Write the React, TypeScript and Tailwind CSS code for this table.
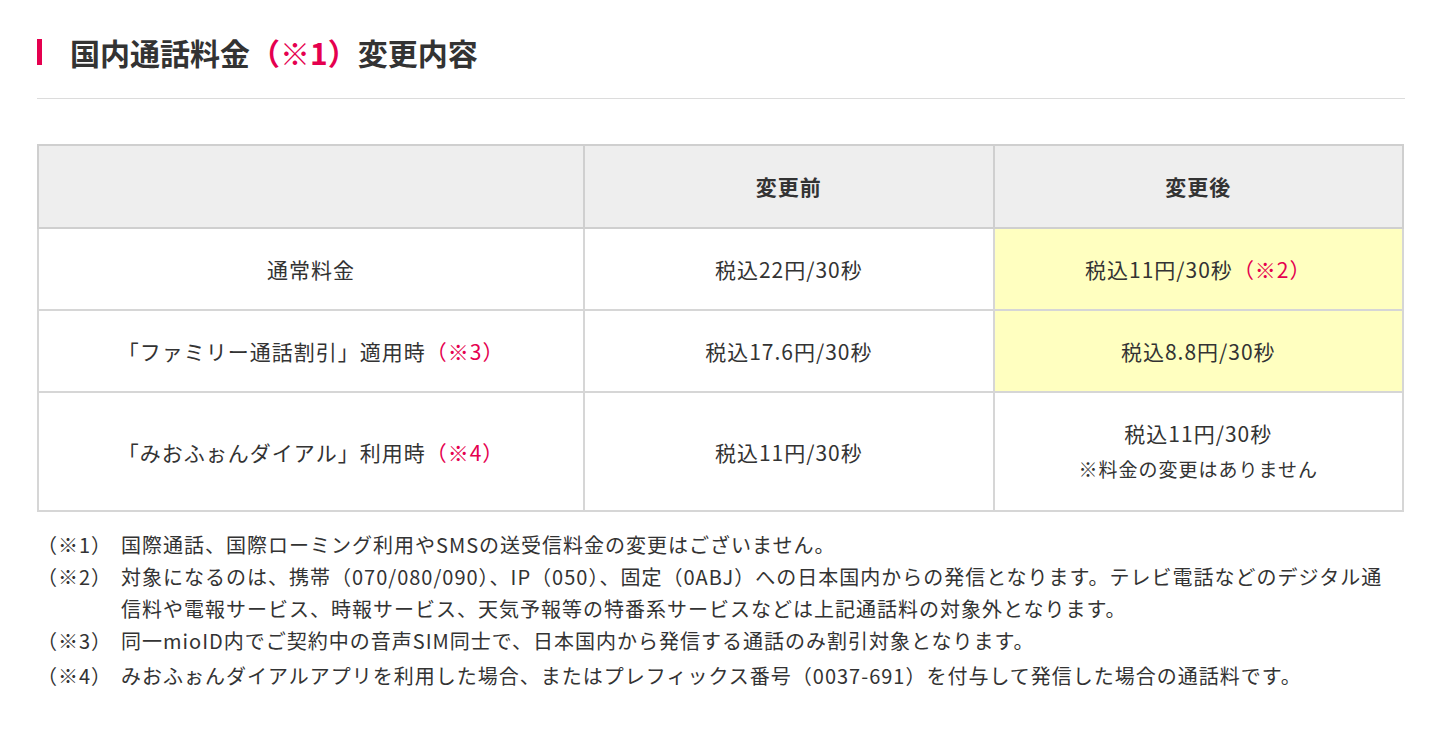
const font = { fontFamily: '"Noto Sans CJK JP", "Noto Sans", sans-serif' };

type Row = {
  label: React.ReactNode;
  before: string;
  after: React.ReactNode;
  highlight?: boolean;
};

const Red = ({ children }: { children: React.ReactNode }) => (
  <span className="text-[#e5004f]">{children}</span>
);

const rows: Row[] = [
  {
    label: "通常料金",
    before: "税込22円/30秒",
    after: (
      <>
        税込11円/30秒<Red>（※2）</Red>
      </>
    ),
    highlight: true,
  },
  {
    label: (
      <>
        「ファミリー通話割引」適用時<Red>（※3）</Red>
      </>
    ),
    before: "税込17.6円/30秒",
    after: "税込8.8円/30秒",
    highlight: true,
  },
  {
    label: (
      <>
        「みおふぉんダイアル」利用時<Red>（※4）</Red>
      </>
    ),
    before: "税込11円/30秒",
    after: (
      <>
        <div>税込11円/30秒</div>
        <div className="text-[19px] leading-[38px]">※料金の変更はありません</div>
      </>
    ),
  },
];

const notes: [string, string][] = [
  ["（※1）", "国際通話、国際ローミング利用やSMSの送受信料金の変更はございません。"],
  [
    "（※2）",
    "対象になるのは、携帯（070/080/090）、IP（050）、固定（0ABJ）への日本国内からの発信となります。テレビ電話などのデジタル通信料や電報サービス、時報サービス、天気予報等の特番系サービスなどは上記通話料の対象外となります。",
  ],
  ["（※3）", "同一mioID内でご契約中の音声SIM同士で、日本国内から発信する通話のみ割引対象となります。"],
  ["（※4）", "みおふぉんダイアルアプリを利用した場合、またはプレフィックス番号（0037-691）を付与して発信した場合の通話料です。"],
];

export default function App() {
  return (
    <div className="min-h-[740px] bg-white text-[#333] px-[37px] pt-[34px]" style={font}>
      <div className="flex items-center h-[36px]">
        <div className="w-[5px] h-[26px] bg-[#e5004f]" />
        <h2 className="ml-[28px] text-[30px] font-bold leading-[36px]">
          国内通話料金<Red>（※1）</Red>変更内容
        </h2>
      </div>
      <hr className="mt-[28px] border-0 border-t border-[#dcdcdc] w-[1368px]" />

      <table className="mt-[45px] w-[1367px] border-collapse text-[21px] tracking-[1px] text-center">
        <colgroup>
          <col className="w-[547px]" />
          <col className="w-[410px]" />
          <col className="w-[410px]" />
        </colgroup>
        <thead>
          <tr className="bg-[#eeeeee] h-[83px]">
            <th className="border-2 border-[#cfcfcf]" />
            <th className="border-2 border-[#cfcfcf] font-bold">変更前</th>
            <th className="border-2 border-[#cfcfcf] font-bold">変更後</th>
          </tr>
        </thead>
        <tbody>
          {rows.map((r, i) => (
            <tr key={i} className={i === 2 ? "h-[119px]" : "h-[82px]"}>
              <td className="border-2 border-[#d6d6d6] leading-[34px]">{r.label}</td>
              <td className="border-2 border-[#d6d6d6] leading-[34px]">{r.before}</td>
              <td
                className={
                  "border-2 border-[#d6d6d6] leading-[34px] " + (r.highlight ? "bg-[#ffffc0]" : "")
                }
              >
                {r.after}
              </td>
            </tr>
          ))}
        </tbody>
      </table>

      <div className="mt-[17px] text-[20px] tracking-[1px] leading-[32px] w-[1358px]">
        {notes.map(([mark, text], i) => (
          <div key={mark} className={"flex " + (i === 3 ? "mt-[3px]" : "")}>
            <div className="w-[84px] shrink-0">{mark}</div>
            <div>{text}</div>
          </div>
        ))}
      </div>
    </div>
  );
}
